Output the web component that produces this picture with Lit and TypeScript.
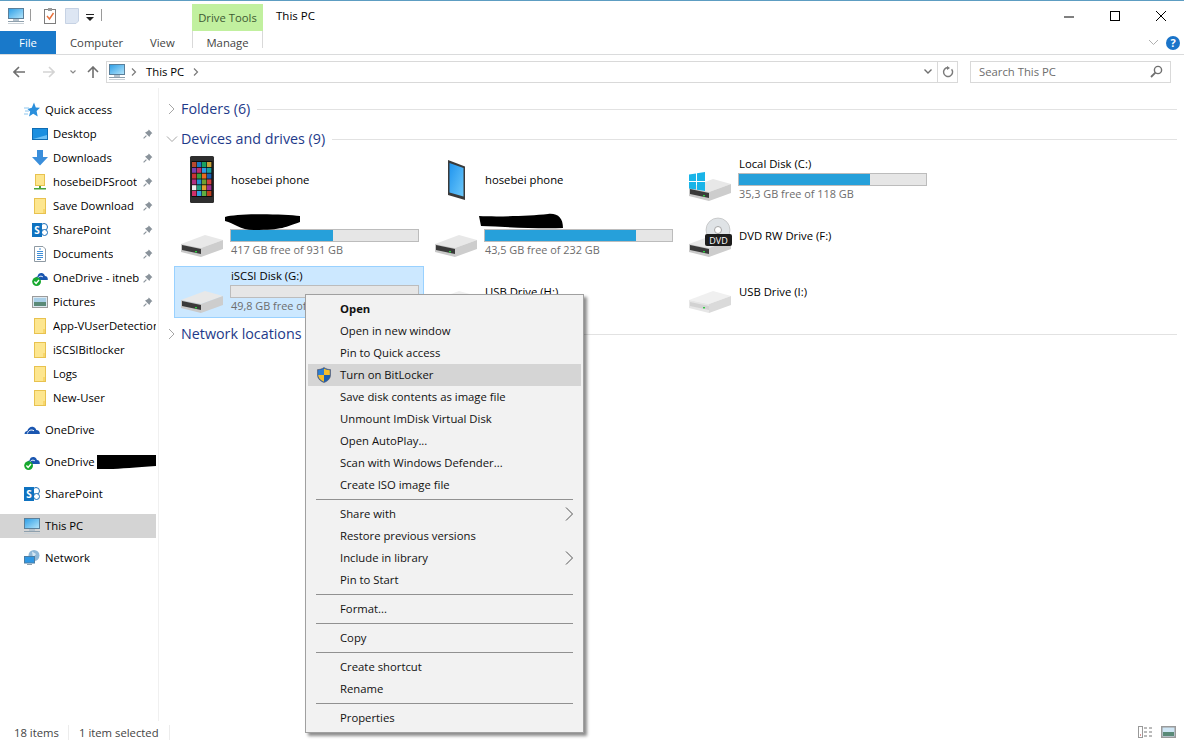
import { LitElement, html, css, svg } from "lit";
import { customElement } from "lit/decorators.js";

const monitor = html`<svg class="i16" viewBox="0 0 16 16"><defs><linearGradient id="scr" x1="0" y1="0" x2="1" y2="1"><stop offset="0" stop-color="#2b9de6"/><stop offset="1" stop-color="#b6e6fb"/></linearGradient></defs><rect x="0.5" y="0.5" width="15" height="10" fill="url(#scr)" stroke="#5a7f9a"/><rect x="5" y="11" width="6" height="2" fill="#b5c2cc"/><rect x="0" y="13" width="16" height="1" fill="#8fa0ad"/><rect x="0" y="15" width="16" height="1" fill="#c8d0d6"/></svg>`;

const folder = html`<svg class="i16" viewBox="0 0 16 16"><rect x="2.5" y="0.5" width="11" height="15" fill="#fde68f" stroke="#e8c24f"/><rect x="11" y="11" width="2" height="4" fill="#f8d76c"/></svg>`;

const pin = html`<svg class="pin" viewBox="0 0 10 10"><path d="M5.8 0.6 9.4 4.2 8.3 4.8 6.9 6.8 6.4 8 2 3.6 3.2 3.1 5.2 1.7Z" fill="#8a939b"/><path d="M3.4 6.6 0.6 9.4" stroke="#8a939b" stroke-width="1.2"/></svg>`;

const star = html`<svg class="i16" viewBox="0 0 16 16"><path d="M10 .5 11.8 5.4 16 5.8 12.6 9 13.7 14.5 9.2 11.7 5 14.5 6.2 9.4 3.5 7 7.8 5.8Z" fill="#2a8fdc"/><path d="M0 6H5M1 9H5M0 12H4" stroke="#8cc6ef" stroke-width="1"/></svg>`;

const desktop = html`<svg class="i16" viewBox="0 0 16 16"><rect x="0.5" y="2.5" width="15" height="11" fill="#1b8fe0" stroke="#0f6cb3"/><path d="M1 13 15 9V13Z" fill="#6cc0f5"/></svg>`;

const download = html`<svg class="i16" viewBox="0 0 16 16"><path d="M5 0H11V7H16L8 15.5 0 7H5Z" fill="#3a8edb"/></svg>`;

const netFolder = html`<svg class="i16" viewBox="0 0 16 16"><rect x="3.5" y="0.5" width="9" height="11" fill="#fde68f" stroke="#e8c24f"/><rect x="7" y="12" width="2" height="2" fill="#46a23a"/><rect x="2" y="14" width="12" height="1.5" fill="#46a23a"/></svg>`;

const sharepoint = html`<svg class="i16" viewBox="0 0 16 16"><circle cx="12" cy="5" r="3.5" fill="#fff" stroke="#1d6fb8"/><circle cx="12.5" cy="10.5" r="3" fill="#fff" stroke="#1d6fb8"/><rect x="0" y="1" width="10" height="14" fill="#0f72c0"/><text x="5" y="12" class="spS" text-anchor="middle">S</text></svg>`;

const documents = html`<svg class="i16" viewBox="0 0 16 16"><path d="M2.5.5H11L13.5 3V15.5H2.5Z" fill="#fff" stroke="#8f9aa3"/><path d="M7 3H9M5 5.5H11M5 7.5H11M5 9.5H11M5 11.5H11M5 13.5H9" stroke="#3e8ed8"/></svg>`;

const onedrive = html`<svg class="i16" viewBox="0 0 16 16"><path d="M0.5 12C0.5 10 2 9 3.3 9 4 6 7 4 9.5 5 11 5.6 12 6.8 12.2 8 14.5 8 16 9.5 15.8 12H1Z" fill="#1a56b0"/><path d="M3.4 11.5C4.2 8.5 7 7 10 8.8" stroke="#fff" stroke-width="1" fill="none"/></svg>`;

const onedriveOk = html`<svg class="i16" viewBox="0 0 16 16"><path d="M3 9.5C3 7.5 4.3 6.5 5.5 6.5 6 3.5 8.5 2.5 10.6 3.3 12 3.9 12.7 5 12.9 6 14.8 6 16 7.6 15.8 10H3Z" fill="#1a56b0"/><path d="M5.6 9C6.2 6.6 8.4 5.4 10.8 6.8" stroke="#fff" stroke-width="1" fill="none"/><circle cx="4.6" cy="11.6" r="4.4" fill="#17a82e"/><path d="M2.4 11.6 4.1 13.4 7 10" stroke="#fff" stroke-width="1.4" fill="none"/></svg>`;

const pictures = html`<svg class="i16" viewBox="0 0 16 16"><rect x="0.5" y="2.5" width="15" height="11" fill="#dce8f0" stroke="#9b9b9b"/><rect x="2" y="4" width="12" height="4" fill="#a9cfe8"/><rect x="2" y="8" width="12" height="4" fill="#5a8a78"/></svg>`;

const network = html`<svg class="i16" viewBox="0 0 16 16"><circle cx="10" cy="5.5" r="5.5" fill="#8fb8d8"/><path d="M8 1.5 12 4 9 8Z" fill="#d7e7f2"/><rect x="0.5" y="6.5" width="10" height="6.5" fill="#2f97e3" stroke="#4c7da3"/><rect x="3" y="14" width="5" height="1" fill="#8fa0ad"/></svg>`;

const shield = html`<svg class="shield" viewBox="0 0 14 16"><path d="M7 .5C9 2 11.5 2.6 13.5 2.6V8C13.5 12 10 14.5 7 15.5 4 14.5.5 12 .5 8V2.6C2.5 2.6 5 2 7 .5Z" fill="#1d5fb0" stroke="#556"  stroke-width=".6"/><path d="M7 1.5V8H1.2V3.2C3.2 3.2 5.4 2.6 7 1.5Z" fill="#2f7fd0"/><path d="M7 1.5C8.6 2.6 10.8 3.2 12.8 3.2V8H7Z" fill="#f6be2c"/><path d="M1.2 8H7V14.7C4.4 13.8 1.2 11.4 1.2 8Z" fill="#f6be2c"/></svg>`;

const driveBody = (light: boolean) => svg`
  <path d="M7 34 31 25 49 30 27 38Z" fill="${light ? "#f0f0f0" : "#e8e8e8"}"/>
  <path d="M27 38 49 30V39L27 47Z" fill="${light ? "#dadada" : "#cdcdcd"}"/>
  <path d="M7 34 27 38V47L7 42Z" fill="${light ? "#e6e6e6" : "#c9c9c9"}"/>
  ${light
    ? svg`<path d="M8 36 27 40V44L8 40Z" fill="#d2d2d2"/>`
    : svg`<path d="M8 35 27 39V44L8 40Z" fill="#3a3a3a"/>`}
  <rect x="21" y="41" width="2" height="1.4" fill="#2ecc40"/>`;

const phoneColors = ["#b84a30","#1a78c2","#1aa260","#c9a23a","#7a3fb0","#c22f6a","#2b9de6","#18a0a0","#cc3333","#3aa040","#e86a20","#1a60b0","#b03080","#2090d0","#70a030","#d04040","#eeeeee","#20a080","#e0a030","#a03090","#d02f6a","#30a0e0","#60b040","#c04020"];

const phone = svg`<rect x="16" y="2" width="24" height="47" rx="1.5" fill="#2e2e2e"/><rect x="17.5" y="7" width="21" height="36" fill="#0c0c0c"/>${phoneColors.map((c, i) => svg`<rect x="${18 + (i % 4) * 5}" y="${8 + Math.floor(i / 4) * 5.8}" width="4.4" height="5" fill="${c}"/>`)}`;

const tablet = svg`<defs><linearGradient id="tb" x1="0" y1="0" x2="1" y2="1"><stop offset="0" stop-color="#1f94ee"/><stop offset="1" stop-color="#6cc8fa"/></linearGradient></defs><path d="M20 6 37 12.5V46L20 41Z" fill="#3a3a3a"/><path d="M21.5 9 35.5 14V42.5L21.5 38.5Z" fill="url(#tb)"/>`;

const winFlag = svg`<path d="M7 20.5 14 19.5V27H7ZM15 19.3 23 18V27H15ZM7 28H14V35.5L7 34.5ZM15 28H23V37L15 35.7Z" fill="#19b4e8"/>`;

const dvd = svg`<circle cx="36" cy="20" r="12" fill="#dfe3e6" stroke="#b4b4b4" stroke-width=".6"/><circle cx="36" cy="20" r="3.5" fill="#fff" stroke="#a4a4a4"/><rect x="23" y="24" width="27" height="12" rx="2" fill="#1d1d1d"/><text x="36.5" y="33.6" class="dvdT" text-anchor="middle">DVD</text>`;

interface Drive { name?: string; free?: string; pct?: number; icon: string; blob?: string; sel?: boolean; }

const drives: Drive[] = [
  { name: "hosebei phone", icon: "phone" },
  { name: "hosebei phone", icon: "tablet" },
  { name: "Local Disk (C:)", free: "35,3 GB free of 118 GB", pct: 70, icon: "win" },
  { free: "417 GB free of 931 GB", pct: 54.5, icon: "hdd", blob: "M1 4C14 0 60 1 76 3V9C62 14 58 17 30 17 16 17 10 10 1 8Z" },
  { free: "43,5 GB free of 232 GB", pct: 81, icon: "hdd", blob: "M1 3C20 4 50 3 70 1 80 0 85 5 85 15 60 16 30 14 3 13Z" },
  { name: "DVD RW Drive (F:)", icon: "dvd" },
  { name: "iSCSI Disk (G:)", free: "49,8 GB free of 50,0 GB", pct: 0, icon: "hdd", sel: true },
  { name: "USB Drive (H:)", icon: "usb" },
  { name: "USB Drive (I:)", icon: "usb" },
];

const driveIcon = (k: string) => {
  const inner =
    k === "phone" ? phone :
    k === "tablet" ? tablet :
    k === "win" ? svg`${driveBody(false)}${winFlag}` :
    k === "dvd" ? svg`${driveBody(false)}${dvd}` :
    k === "usb" ? driveBody(true) : driveBody(false);
  return html`<svg class="tileIcon" viewBox="0 0 56 52">${inner}</svg>`;
};

const quick: [string, any, boolean][] = [
  ["Desktop", desktop, true],
  ["Downloads", download, true],
  ["hosebeiDFSroot", netFolder, true],
  ["Save Download", folder, true],
  ["SharePoint", sharepoint, true],
  ["Documents", documents, true],
  ["OneDrive - itnebula", onedriveOk, true],
  ["Pictures", pictures, true],
  ["App-VUserDetection", folder, false],
  ["iSCSIBitlocker", folder, false],
  ["Logs", folder, false],
  ["New-User", folder, false],
];

type MI = { t?: string; bold?: boolean; hot?: boolean; sub?: boolean; sep?: boolean };
const menu: MI[] = [
  { t: "Open", bold: true }, { t: "Open in new window" }, { t: "Pin to Quick access" },
  { t: "Turn on BitLocker", hot: true }, { t: "Save disk contents as image file" },
  { t: "Unmount ImDisk Virtual Disk" }, { t: "Open AutoPlay..." }, { t: "Scan with Windows Defender..." },
  { t: "Create ISO image file" }, { sep: true },
  { t: "Share with", sub: true }, { t: "Restore previous versions" }, { t: "Include in library", sub: true },
  { t: "Pin to Start" }, { sep: true }, { t: "Format..." }, { sep: true }, { t: "Copy" }, { sep: true },
  { t: "Create shortcut" }, { t: "Rename" }, { sep: true }, { t: "Properties" },
];

@customElement("app-root")
export class AppRoot extends LitElement {
  static styles = css`
    :host { display: flex; flex-direction: column; position: relative; width: 1184px; height: 743px; overflow: hidden; background: #fff; color: #000; font: 11.3px/16px "Open Sans", sans-serif; border-top: 1px solid #5d9dc2; box-sizing: border-box; }
    svg { display: block; flex: none; }
    .i16 { width: 16px; height: 16px; }
    .spS { font: bold 10px "Open Sans", sans-serif; fill: #fff; }
    .dvdT { font: 9px "Open Sans", sans-serif; fill: #fff; }

    .title { display: flex; height: 30px; flex: none; }
    .qat { width: 192px; display: flex; align-items: flex-start; padding: 7px 0 0 8px; box-sizing: border-box; }
    .qsep { width: 1px; height: 12px; background: #9a9a9a; margin-top: 1px; }
    .qat .a { margin-left: 6px; } .qat .b { margin-left: 11px; } .qat .c { margin-left: 6px; } .qat .d { margin-left: 6px; } .qat .e { margin-left: 7px; }
    .ctx { width: 71px; margin-top: 3px; height: 27px; background: #c1f09f; display: flex; align-items: center; justify-content: center; padding-top: 1px; box-sizing: border-box; color: #3d5a33; }
    .wintitle { margin-left: 13px; padding-top: 7px; font-size: 11.5px; }
    .wbtns { margin-left: auto; display: flex; }
    .wb { width: 46px; display: flex; justify-content: center; padding-top: 9px; box-sizing: border-box; }
    .wb svg { width: 12px; height: 12px; }

    .tabs { display: flex; height: 24px; flex: none; align-items: stretch; border-bottom: 1px solid #dadbdc; box-sizing: border-box; color: #444; }
    .file { width: 56px; background: #1979ca; color: #fff; display: flex; align-items: center; justify-content: center; }
    .tab { display: flex; align-items: center; padding-top: 1px; box-sizing: border-box; }
    .t1 { margin-left: 14px; width: 80px; } .t2 { width: 42px; }
    .manage { width: 71px; height: 17px; border: solid #d9d9d9; border-width: 0 1px; justify-content: center; padding-top: 7px; box-sizing: border-box; margin-top: 0; }
    .ribR { margin-left: auto; display: flex; align-items: center; gap: 7px; padding-right: 4px; }
    .ribR .chev { width: 11px; height: 7px; }
    .help { width: 14px; height: 14px; border-radius: 50%; background: #1a74c9; color: #fff; font: bold 11px/14px "Open Sans", sans-serif; text-align: center; }

    .addr { display: flex; height: 33px; flex: none; align-items: center; padding-left: 13px; box-sizing: border-box; }
    .nav { width: 12px; height: 12px; }
    .nf { margin-left: 18px; } .nd { margin-left: 15px; } .nu { margin-left: 11px; }
    .addrBox { margin-left: 7px; width: 852px; height: 22px; border: 1px solid #d9d9d9; box-sizing: border-box; display: flex; align-items: center; padding-left: 2px; }
    .crumb { width: 6px; height: 8px; margin-left: 9px; }
    .crumb.first { margin-left: 6px; }
    .crumbT { margin-left: 9px; }
    .addrEnd { margin-left: auto; display: flex; align-items: center; height: 100%; }
    .ddn { width: 8px; height: 5px; margin-right: 5px; }
    .refr { border-left: 1px solid #d9d9d9; width: 19px; height: 100%; display: flex; align-items: center; justify-content: center; }
    .refr svg { width: 12px; height: 12px; }
    .search { margin-left: 12px; width: 201px; height: 22px; border: 1px solid #d9d9d9; box-sizing: border-box; display: flex; align-items: center; justify-content: space-between; padding: 0 7px 0 8px; color: #6d6d6d; }
    .search svg { width: 13px; height: 13px; }

    .main { flex: 1; display: flex; min-height: 0; }
    .side { width: 159px; flex: none; box-sizing: border-box; padding: 10px 2px 0 0; border-right: 1px solid #f0f0f0; }
    .row { display: flex; align-items: center; height: 24px; padding-left: 24px; position: relative; }
    .row .lbl { margin-left: 5px; white-space: nowrap; overflow: hidden; flex: 1; }
    .row.sub { padding-left: 32px; }
    .row.top { margin-bottom: 8px; }
    .row.sel { background: #d4d4d4; }
    .row.sub .lbl.pinned { flex: none; max-width: 86px; }
    .pin { width: 10px; height: 10px; position: absolute; left: 143px; top: 7px; }
    .gap8 { height: 8px; }
    .blobS { position: absolute; left: 96px; top: 4px; width: 60px; height: 16px; }

    .content { flex: 1; padding: 11px 7px 0 7px; min-width: 0; }
    .gh { display: flex; align-items: center; height: 20px; font-size: 14.3px; color: #1e3a8a; }
    .gh .ch { width: 15px; height: 12px; margin-right: 0; }
    .gh .ln { flex: 1; height: 1px; background: #e2e2e2; margin-left: 7px; }
    .gh.mt { margin-top: 10px; }
    .grid { display: grid; grid-template-columns: repeat(3, 250px); grid-auto-rows: 52px; gap: 4px; margin: 5px 0 6px 8px; }
    .tile { display: flex; position: relative; box-sizing: border-box; }
    .tile.sel { background: #cce8ff; outline: 1px solid #99d1ff; outline-offset: -1px; }
    .tileIcon { width: 56px; height: 52px; }
    .ti { flex: 1; display: flex; flex-direction: column; justify-content: center; padding-left: 1px; }
    .ti.bar { justify-content: flex-start; padding-top: 2px; }
    .ti .nm { height: 16px; white-space: nowrap; }
    .bar-o { width: 189px; height: 13px; margin: 1px 0 0 -1px; background: #e6e6e6; border: 1px solid #bcbcbc; box-sizing: border-box; }
    .bar-i { height: 100%; background: #26a0da; }
    .ti .cap { height: 16px; color: #6d6d6d; white-space: nowrap; font-size: 10.9px; }
    .blobT { position: absolute; left: 50px; top: 3px; width: 86px; height: 18px; }

    .status { height: 22px; flex: none; display: flex; align-items: center; color: #444; padding: 0 8px 0 14px; box-sizing: border-box; }
    .s1 { width: 54px; border-right: 1px solid #ececec; height: 15px; }
    .s2 { margin-left: 10px; width: 90px; border-right: 1px solid #ececec; height: 15px; }
    .vw { margin-left: auto; display: flex; gap: 8px; }
    .vw svg { width: 15px; height: 12px; }

    .menu { position: absolute; left: 305px; top: 293px; width: 279px; box-sizing: border-box; background: #f2f2f2; border: 1px solid #a0a0a0; padding: 3px 2px; box-shadow: 3px 3px 3px rgba(0,0,0,.45); color: #111; }
    .mi { height: 22px; display: flex; align-items: center; padding-left: 32px; position: relative; white-space: nowrap; }
    .mi.b { font-weight: 700; }
    .mi.hot { background: #d5d5d5; }
    .shield { position: absolute; left: 9px; top: 3px; width: 14px; height: 16px; }
    .arr { position: absolute; right: 8px; top: 4px; width: 8px; height: 14px; }
    .sep { height: 7px; display: flex; align-items: center; padding: 0 8px; }
    .sep i { flex: 1; height: 1px; background: #919191; }
  `;

  private chevR = html`<svg class="ch" viewBox="0 0 15 12"><path d="M3 1 8 6 3 11" fill="none" stroke="#a6a6a6"/></svg>`;
  private chevD = html`<svg class="ch" viewBox="0 0 15 12"><path d="M1 3.5 6 8.5 11 3.5" fill="none" stroke="#a6a6a6"/></svg>`;

  render() {
    return html`
      <div class="title">
        <div class="qat">
          ${monitor}
          <div class="qsep a"></div>
          <svg class="i16 b" viewBox="0 0 16 16"><rect x="2.5" y="1.5" width="11" height="14" fill="#fff" stroke="#7d7d7d"/><rect x="6" y="0" width="4" height="3" fill="#9a9a9a"/><path d="M5 8 7.5 11 11.5 5" fill="none" stroke="#e8703a" stroke-width="1.4"/></svg>
          <svg class="i16 c" viewBox="0 0 16 16"><path d="M1.5 .5H14.5V13L12 15.5H1.5Z" fill="#dde6f3" stroke="#c6d2e4"/></svg>
          <svg class="d" width="8" height="16" viewBox="0 0 8 16"><rect x="0" y="6" width="8" height="1" fill="#222"/><path d="M0 9H8L4 13Z" fill="#222"/></svg>
          <div class="qsep e"></div>
        </div>
        <div class="ctx">Drive Tools</div>
        <div class="wintitle">This PC</div>
        <div class="wbtns">
          <div class="wb"><svg viewBox="0 0 12 12"><path d="M1 7H11" stroke="#000"/></svg></div>
          <div class="wb"><svg viewBox="0 0 12 12"><rect x="1.5" y="1.5" width="9" height="9" fill="none" stroke="#000"/></svg></div>
          <div class="wb"><svg viewBox="0 0 12 12"><path d="M1 1 11 11M11 1 1 11" stroke="#000"/></svg></div>
        </div>
      </div>
      <div class="tabs">
        <div class="file">File</div>
        <div class="tab t1">Computer</div>
        <div class="tab t2">View</div>
        <div class="tab manage">Manage</div>
        <div class="ribR">
          <svg class="chev" viewBox="0 0 11 7"><path d="M1 1 5.5 5.5 10 1" fill="none" stroke="#b0b0b0"/></svg>
          <div class="help">?</div>
        </div>
      </div>
      <div class="addr">
        <svg class="nav" viewBox="0 0 12 12"><path d="M6 1 1 6 6 11M1 6H12" fill="none" stroke="#6f6f6f" stroke-width="1.6"/></svg>
        <svg class="nav nf" viewBox="0 0 12 12"><path d="M6 1 11 6 6 11M11 6H0" fill="none" stroke="#d4d4d4" stroke-width="1.6"/></svg>
        <svg class="nd" width="6" height="4" viewBox="0 0 6 4"><path d="M.5 .5 3 3 5.5 .5" fill="none" stroke="#8a8a8a" stroke-width="1.2"/></svg>
        <svg class="nav nu" viewBox="0 0 12 12"><path d="M1 6 6 1 11 6M6 1V12" fill="none" stroke="#6f6f6f" stroke-width="1.6"/></svg>
        <div class="addrBox">
          ${monitor}
          <svg class="crumb first" viewBox="0 0 6 8"><path d="M1 .5 4.5 4 1 7.5" fill="none" stroke="#7a7a7a" stroke-width="1.2"/></svg>
          <span class="crumbT">This PC</span>
          <svg class="crumb" viewBox="0 0 6 8"><path d="M1 .5 4.5 4 1 7.5" fill="none" stroke="#7a7a7a" stroke-width="1.2"/></svg>
          <div class="addrEnd">
            <svg class="ddn" viewBox="0 0 8 5"><path d="M.5 .5 4 4 7.5 .5" fill="none" stroke="#6f6f6f" stroke-width="1.4"/></svg>
            <div class="refr"><svg viewBox="0 0 12 12"><path d="M9.6 3.2A4.5 4.5 0 1 1 6 1.5" fill="none" stroke="#7a7a7a" stroke-width="1.4"/><path d="M5 0V4L8 2Z" fill="#7a7a7a"/></svg></div>
          </div>
        </div>
        <div class="search">Search This PC
          <svg viewBox="0 0 13 13"><circle cx="8" cy="5" r="3.6" fill="none" stroke="#6f6f6f" stroke-width="1.4"/><path d="M5.4 7.6 1 12" stroke="#6f6f6f" stroke-width="1.8"/></svg>
        </div>
      </div>
      <div class="main">
        <div class="side">
          <div class="row">${star}<span class="lbl">Quick access</span></div>
          ${quick.map(([t, ic, p]) => html`<div class="row sub">${ic}<span class="lbl ${p ? "pinned" : ""}">${t}</span>${p ? pin : ""}</div>`)}
          <div class="gap8"></div>
          <div class="row top">${onedrive}<span class="lbl">OneDrive</span></div>
          <div class="row top">${onedriveOk}<span class="lbl">OneDrive</span>
            <svg class="blobS" viewBox="0 0 60 16"><path d="M1 1H60V12C40 13 25 15 12 15H1Z" fill="#000"/></svg></div>
          <div class="row top">${sharepoint}<span class="lbl">SharePoint</span></div>
          <div class="row top sel">${monitor}<span class="lbl">This PC</span></div>
          <div class="row">${network}<span class="lbl">Network</span></div>
        </div>
        <div class="content">
          <div class="gh">${this.chevR}Folders (6)<div class="ln"></div></div>
          <div class="gh mt">${this.chevD}Devices and drives (9)<div class="ln"></div></div>
          <div class="grid">
            ${drives.map((d) => html`<div class="tile ${d.sel ? "sel" : ""}">
              ${driveIcon(d.icon)}
              <div class="ti ${d.free ? "bar" : ""}">
                <div class="nm">${d.name ?? ""}</div>
                ${d.free ? html`<div class="bar-o"><div class="bar-i" style="width:${d.pct}%"></div></div><div class="cap">${d.free}</div>` : ""}
              </div>
              ${d.blob ? html`<svg class="blobT" viewBox="0 0 86 18"><path d="${d.blob}" fill="#000"/></svg>` : ""}
            </div>`)}
          </div>
          <div class="gh">${this.chevR}Network locations<div class="ln"></div></div>
        </div>
      </div>
      <div class="status">
        <div class="s1">18 items</div>
        <div class="s2">1 item selected</div>
        <div class="vw">
          <svg viewBox="0 0 15 12"><rect x=".5" y=".5" width="4" height="11" fill="none" stroke="#999"/><path d="M6 2H9M11 2H14M6 6H9M11 6H14M6 10H9M11 10H14" stroke="#777"/><rect x="2" y="8.5" width="1" height="1" fill="#b03030"/></svg>
          <svg viewBox="0 0 15 12"><rect x=".75" y=".75" width="13.5" height="10.5" fill="#cfe6f5" stroke="#9a9a9a" stroke-width="1.5"/><rect x="2" y="6" width="11" height="4" fill="#5a8a78"/></svg>
        </div>
      </div>
      <div class="menu">
        ${menu.map((m) => m.sep
          ? html`<div class="sep"><i></i></div>`
          : html`<div class="mi ${m.bold ? "b" : ""} ${m.hot ? "hot" : ""}">
              ${m.hot ? shield : ""}${m.t}
              ${m.sub ? html`<svg class="arr" viewBox="0 0 8 14"><path d="M1 .5 7.5 7 1 13.5" fill="none" stroke="#555"/></svg>` : ""}
            </div>`)}
      </div>
    `;
  }
}
